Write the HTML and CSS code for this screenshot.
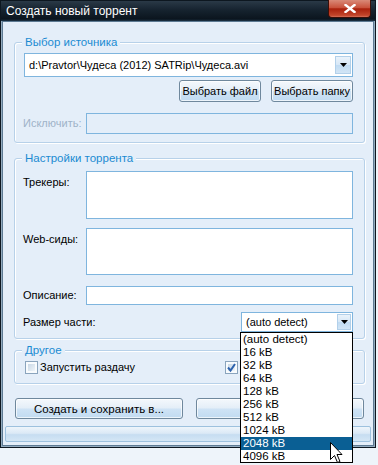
FILE: index.html
```html
<!DOCTYPE html>
<html lang="ru">
<head>
    <meta charset="UTF-8">
    <title>Создать новый торрент</title>
    <link rel="stylesheet" href="styles.css">
</head>
<body>
<div class="screen">
    <div class="window">
        <div class="titlebar">
            <span class="title">Создать новый торрент</span>
            <button class="close-btn">
                <svg width="12" height="9" viewBox="0 0 12 9"><path d="M1.5 1 L10.5 8 M10.5 1 L1.5 8" stroke="#fff" stroke-width="2.4" stroke-linecap="square"/></svg>
            </button>
        </div>
        <div class="client">
            <div class="group group-source">
                <div class="group-title">Выбор источника</div>
                <div class="combo combo-path">
                    <span class="combo-text">d:\Pravtor\Чудеса (2012) SATRip\Чудеса.avi</span>
                    <span class="combo-btn"><svg width="7" height="4" viewBox="0 0 7 4"><polygon points="0,0 7,0 3.5,4" fill="#000"/></svg></span>
                </div>
                <div class="btn-row">
                    <button class="btn btn-pick">Выбрать файл</button>
                    <button class="btn btn-pick">Выбрать папку</button>
                </div>
                <div class="field-row field-exclude">
                    <label class="field-label disabled">Исключить:</label>
                    <input class="field-input" type="text" disabled>
                </div>
            </div>

            <div class="group group-settings">
                <div class="group-title">Настройки торрента</div>
                <div class="field-row field-area trackers">
                    <label class="field-label">Трекеры:</label>
                    <textarea class="field-input"></textarea>
                </div>
                <div class="field-row field-area seeds">
                    <label class="field-label">Web-сиды:</label>
                    <textarea class="field-input"></textarea>
                </div>
                <div class="field-row field-desc">
                    <label class="field-label">Описание:</label>
                    <input class="field-input" type="text">
                </div>
                <div class="field-row field-piece">
                    <label class="field-label">Размер части:</label>
                    <div class="combo combo-piece">
                        <span class="combo-text">(auto detect)</span>
                        <span class="combo-btn"><svg width="7" height="4" viewBox="0 0 7 4"><polygon points="0,0 7,0 3.5,4" fill="#000"/></svg></span>
                    </div>
                </div>
            </div>

            <div class="group group-other">
                <div class="group-title">Другое</div>
                <div class="check-row">
                    <label class="check check-first"><span class="check-box"><span class="check-fill"></span></span>Запустить раздачу</label>
                    <label class="check"><span class="check-box"><span class="check-fill"></span><svg class="check-mark" width="11" height="11" viewBox="0 0 11 11"><path d="M2 5.5 L4.5 8.5 L9 2" fill="none" stroke="#2d62ad" stroke-width="2"/></svg></span></label>
                </div>
            </div>

            <div class="action-row">
                <button class="btn btn-action">Создать и сохранить в...</button>
                <button class="btn btn-action"></button>
            </div>
            <div class="progress"></div>
        </div>
    </div>

    <ul class="dropdown">
        <li>(auto detect)</li>
        <li>16 kB</li>
        <li>32 kB</li>
        <li>64 kB</li>
        <li>128 kB</li>
        <li>256 kB</li>
        <li>512 kB</li>
        <li>1024 kB</li>
        <li class="selected">2048 kB</li>
        <li>4096 kB</li>
    </ul>

    <svg class="cursor" width="13" height="22" viewBox="0 0 13 22">
        <path d="M0.5 0.5 L0.5 17.5 L4.5 13.5 L7.5 20.5 L10 19.5 L7 12.5 L12 12.5 Z" fill="#fff" stroke="#000" stroke-width="1"/>
    </svg>
</div>
</body>
</html>
```

FILE: styles.css
```css
body {
    margin: 0;
    background: #eef4fa;
    font-family: "Liberation Sans", Arial, sans-serif;
    font-size: 11px;
    color: #000;
}
.screen {
    position: relative;
    width: 378px;
    height: 465px;
    overflow: hidden;
}
.window {
    width: 376px;
    height: 448px;
    box-sizing: border-box;
    border: 1px solid #0d1720;
    background: #93abbf;
    padding: 0 1px 1px;
    display: flex;
    flex-direction: column;
}
.titlebar {
    height: 20px;
    margin: 0 -1px;
    background: linear-gradient(#2a3947, #16232f 45%, #0b151e 90%, #1d3346);
    display: flex;
    justify-content: space-between;
    align-items: flex-start;
}
.title {
    padding-left: 5px;
    line-height: 20px;
    font-size: 12px;
    color: #fff;
}
.close-btn {
    width: 43px;
    height: 18px;
    margin: -1px 4px 0 0;
    padding: 0;
    border: 1px solid #3b0f08;
    border-top: none;
    border-radius: 0 0 4px 4px;
    background: linear-gradient(#d98a78, #c9523c 45%, #a9200c 52%, #c2452a 90%, #d8705a);
    display: flex;
    align-items: center;
    justify-content: center;
}
.client {
    flex: 1;
    border: 1px solid #5d7a93;
    background: #e4eef9;
    display: flex;
    flex-direction: column;
}
.group {
    margin: 0 8px 0 11px;
    padding: 0 11px 0 8px;
    border: 1px solid #b7d1e9;
    border-radius: 3px;
    box-shadow: inset 1px 1px 0 #fff, 1px 1px 0 #fff;
}
.group-source { margin-top: 20px; padding-bottom: 8px; }
.group-settings { margin-top: 15px; padding-bottom: 6px; }
.group-other { margin-top: 11px; padding-bottom: 9px; }
.group-title {
    display: table;
    margin: -8px 0 0 -1px;
    padding: 0 3px;
    line-height: 15px;
    font-size: 11.5px;
    background: #e4eef9;
    color: #1b8bd2;
}
.combo {
    display: flex;
    align-items: stretch;
    box-sizing: border-box;
    border: 1px solid #7fb5de;
    background: #fff;
}
.combo-text {
    flex: 1;
    padding-left: 4px;
    display: flex;
    align-items: center;
    white-space: nowrap;
    overflow: hidden;
}
.combo-btn {
    width: 16px;
    box-sizing: border-box;
    border: 1px solid #b2d0ea;
    background: linear-gradient(#eaf3fb, #d6e7f6 50%, #c0dbf2 51%, #d2e5f6);
    display: flex;
    align-items: center;
    justify-content: center;
}
.combo-path {
    margin: 3px 0 0 1px;
    height: 24px;
}
.combo-path .combo-btn { margin: 2px 1px 2px 0; }
.combo-piece {
    width: 112px;
    height: 20px;
}
.combo-piece .combo-btn { width: 14px; margin: 1px 1px 1px 0; }
.btn-row {
    margin-top: 3px;
    display: flex;
    justify-content: flex-end;
    gap: 10px;
}
.btn {
    font-family: inherit;
    font-size: 11px;
    color: #000;
    padding: 0;
    box-sizing: border-box;
    border: 1px solid #6f889d;
    border-radius: 3px;
    background: linear-gradient(#f4f8fc, #e4eef8 48%, #cfe3f5 52%, #c1dbf1);
    box-shadow: inset 0 0 0 1px rgba(255,255,255,0.7);
}
.btn-pick {
    width: 82px;
    height: 22px;
}
.field-row {
    display: flex;
    align-items: center;
}
.field-label {
    width: 63px;
    flex: none;
    line-height: 13px;
    white-space: nowrap;
}
.field-label.disabled { color: #9fb3c8; }
.field-input {
    flex: 1;
    min-width: 0;
    margin: 0;
    box-sizing: border-box;
    border: 1px solid #7fb5de;
    background: #fff;
    font-family: inherit;
    font-size: 11px;
    padding: 1px 3px;
    resize: none;
    outline: none;
}
.field-exclude { margin-top: 11px; }
.field-exclude .field-input {
    height: 21px;
    background: #e4eef9;
}
.field-area { align-items: flex-start; }
.field-area .field-label { padding-top: 5px; }
.trackers { margin-top: 5px; }
.trackers .field-input { height: 48px; }
.seeds { margin-top: 9px; }
.seeds .field-input { height: 47px; }
.field-desc { margin-top: 11px; }
.field-desc .field-input { height: 19px; }
.field-piece {
    margin-top: 7px;
    justify-content: space-between;
}
.field-piece .field-label { width: auto; }
.check-row {
    margin-top: 3px;
    display: flex;
}
.check {
    display: flex;
    align-items: center;
    gap: 2px;
    padding-left: 2px;
    line-height: 13px;
    white-space: nowrap;
}
.check-first {
    flex: none;
    width: 200px;
    box-sizing: border-box;
}
.check-box {
    position: relative;
    width: 13px;
    height: 13px;
    box-sizing: border-box;
    border: 1px solid #8aa4bd;
    background: #f8fbfd;
    flex: none;
}
.check-fill {
    position: absolute;
    inset: 2px;
    background: linear-gradient(135deg, #c9d8e6, #eef4f9);
}
.check-mark {
    position: absolute;
    left: 0;
    top: 0;
}
.action-row {
    margin-top: 14px;
    padding: 0 9px 0 12px;
    display: flex;
    justify-content: space-between;
}
.btn-action {
    width: 168px;
    height: 21px;
    font-size: 11.5px;
}
.progress {
    margin: 7px 2px 0;
    height: 16px;
    box-sizing: border-box;
    border: 1px solid #9dc1de;
    border-radius: 2px;
    background: linear-gradient(#eef5fb, #dbe9f6 45%, #c6ddf1 55%, #d4e6f5);
}
.dropdown {
    position: absolute;
    left: 240px;
    top: 332px;
    width: 113px;
    height: 131px;
    box-sizing: border-box;
    margin: 0;
    padding: 0;
    list-style: none;
    border: 1px solid #000;
    background: #fff;
}
.dropdown li {
    height: 13px;
    line-height: 13px;
    padding-left: 2px;
    font-size: 11.5px;
    white-space: nowrap;
}
.dropdown li.selected {
    background: #0a5f94;
    color: #fff;
}
.cursor {
    position: absolute;
    left: 330px;
    top: 442px;
}
```
